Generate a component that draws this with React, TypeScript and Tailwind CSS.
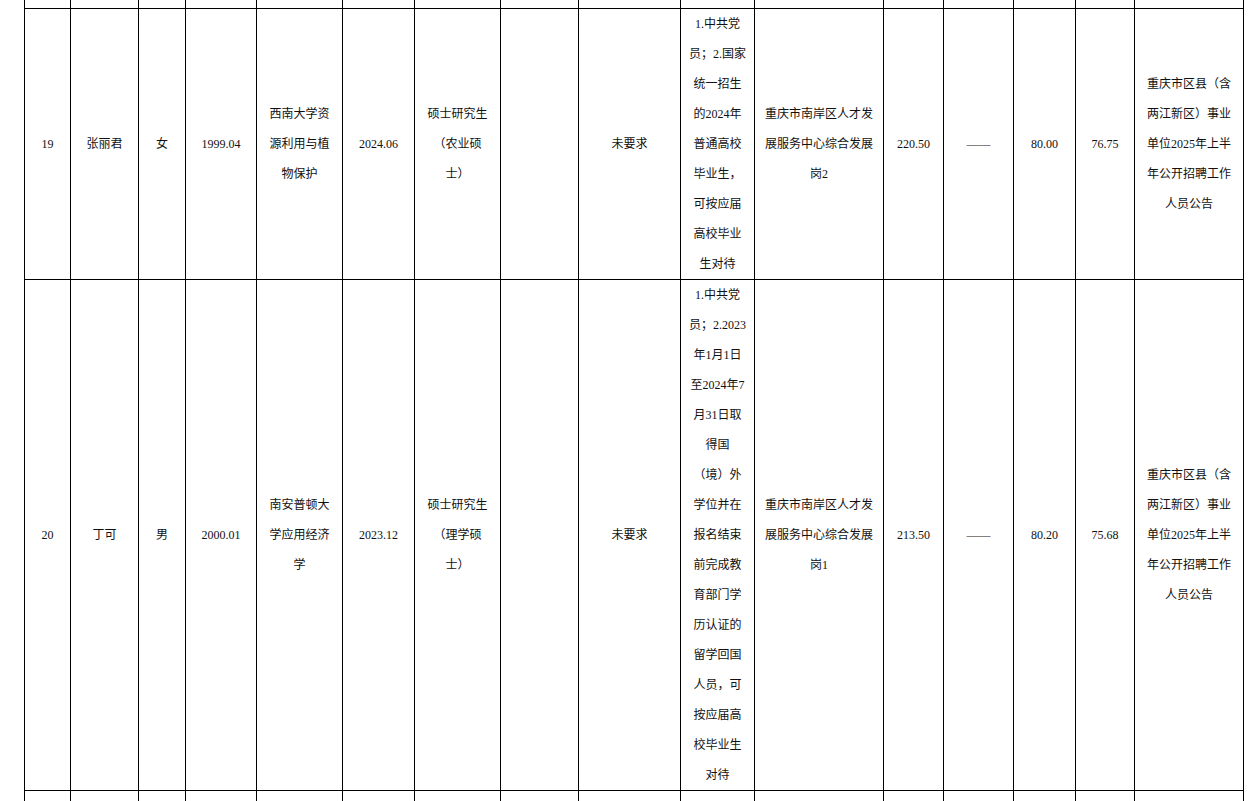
import React from "react";

const row19 = [
  "19",
  "张丽君",
  "女",
  "1999.04",
  "西南大学资源利用与植物保护",
  "2024.06",
  "硕士研究生（农业硕士）",
  "",
  "未要求",
  "1.中共党员；2.国家统一招生的2024年普通高校毕业生，可按应届高校毕业生对待",
  "重庆市南岸区人才发展服务中心综合发展岗2",
  "220.50",
  "——",
  "80.00",
  "76.75",
  "重庆市区县（含两江新区）事业单位2025年上半年公开招聘工作人员公告",
];

const row20 = [
  "20",
  "丁可",
  "男",
  "2000.01",
  "南安普顿大学应用经济学",
  "2023.12",
  "硕士研究生（理学硕士）",
  "",
  "未要求",
  "1.中共党员；2.2023年1月1日至2024年7月31日取得国（境）外学位并在报名结束前完成教育部门学历认证的留学回国人员，可按应届高校毕业生对待",
  "重庆市南岸区人才发展服务中心综合发展岗1",
  "213.50",
  "——",
  "80.20",
  "75.68",
  "重庆市区县（含两江新区）事业单位2025年上半年公开招聘工作人员公告",
];

const empty = Array.from({ length: 16 }, () => "");

function Cell({ text, h }: { text: string; h?: string }) {
  return (
    <div
      className={`border-r border-b border-black flex items-center justify-center px-[7px] ${h ?? ""}`}
    >
      <div className="w-full text-center break-words">{text}</div>
    </div>
  );
}

export default function App() {
  return (
    <div className="w-[1260px] h-[801px] overflow-hidden bg-white text-[#111] font-['Liberation_Serif','Noto_Sans_CJK_SC',serif] text-[12px] leading-[30px] [text-spacing-trim:space-all]">
      <div className="ml-[24px] w-[1220px] border-l border-black grid grid-cols-[46px_68px_47px_71px_86px_72px_86px_78px_102px_74px_129px_60px_70px_62px_59px_109px]">
        {empty.map((t, i) => (
          <Cell key={"a" + i} text={t} h="h-[9px]" />
        ))}
        {row19.map((t, i) => (
          <Cell key={"b" + i} text={t} />
        ))}
        {row20.map((t, i) => (
          <Cell key={"c" + i} text={t} />
        ))}
        {empty.map((t, i) => (
          <Cell key={"d" + i} text={t} h="h-[30px]" />
        ))}
      </div>
    </div>
  );
}
